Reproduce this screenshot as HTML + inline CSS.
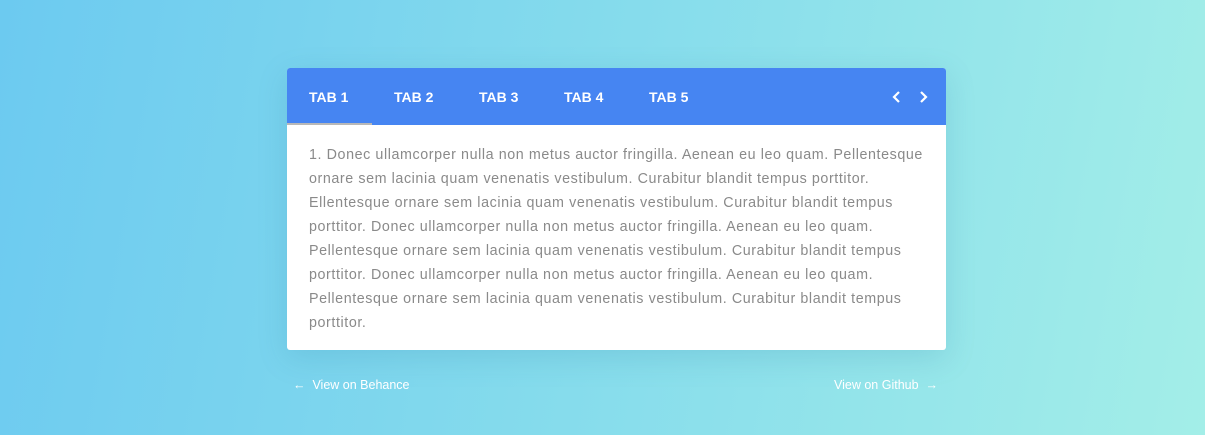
<!DOCTYPE html>
<html><head><style>
html,body{margin:0;width:1205px;height:435px;overflow:hidden}
body{background:linear-gradient(100deg,#6ccaf0 0%,#86dcec 50%,#a3eee8 100%);font-family:"Liberation Sans",sans-serif;position:relative}
.card{position:absolute;left:287px;top:68px;width:659px;height:282px;background:#fff;border-radius:3px;box-shadow:0 8px 30px rgba(40,120,160,.18);overflow:hidden}
.hd{height:57px;background:#4685f2;position:relative}
.tab{position:absolute;top:21px;color:#fff;font-weight:bold;font-size:14px}
.ind{position:absolute;left:0;top:55px;width:85px;height:2px;background:#b8b8b8}
.txt{position:absolute;left:22px;top:75px;width:615px;color:#8a8a8a;font-size:14.3px;line-height:24px;letter-spacing:0.58px}
.lk{position:absolute;top:378px;color:#fff;font-size:12.5px}
</style></head><body>
<div class="card"><div class="hd">
<span class="tab" style="left:22px">TAB 1</span>
<span class="tab" style="left:107px">TAB 2</span>
<span class="tab" style="left:192px">TAB 3</span>
<span class="tab" style="left:277px">TAB 4</span>
<span class="tab" style="left:362px">TAB 5</span>
<svg style="position:absolute;left:603px;top:21px" width="40" height="16"><path d="M9 3 L4 8 L9 13 M31 3 L36 8 L31 13" stroke="#fff" stroke-width="2.2" fill="none"/></svg>
<div class="ind"></div></div>
<div class="txt">1. Donec ullamcorper nulla non metus auctor fringilla. Aenean eu leo quam. Pellentesque ornare sem lacinia quam venenatis vestibulum. Curabitur blandit tempus porttitor. Ellentesque ornare sem lacinia quam venenatis vestibulum. Curabitur blandit tempus porttitor. Donec ullamcorper nulla non metus auctor fringilla. Aenean eu leo quam. Pellentesque ornare sem lacinia quam venenatis vestibulum. Curabitur blandit tempus porttitor. Donec ullamcorper nulla non metus auctor fringilla. Aenean eu leo quam. Pellentesque ornare sem lacinia quam venenatis vestibulum. Curabitur blandit tempus porttitor.</div>
</div>
<div class="lk" style="left:293px">&#8592;&nbsp; View on Behance</div>
<div class="lk" style="left:834px">View on Github &nbsp;&#8594;</div>
</body></html>
